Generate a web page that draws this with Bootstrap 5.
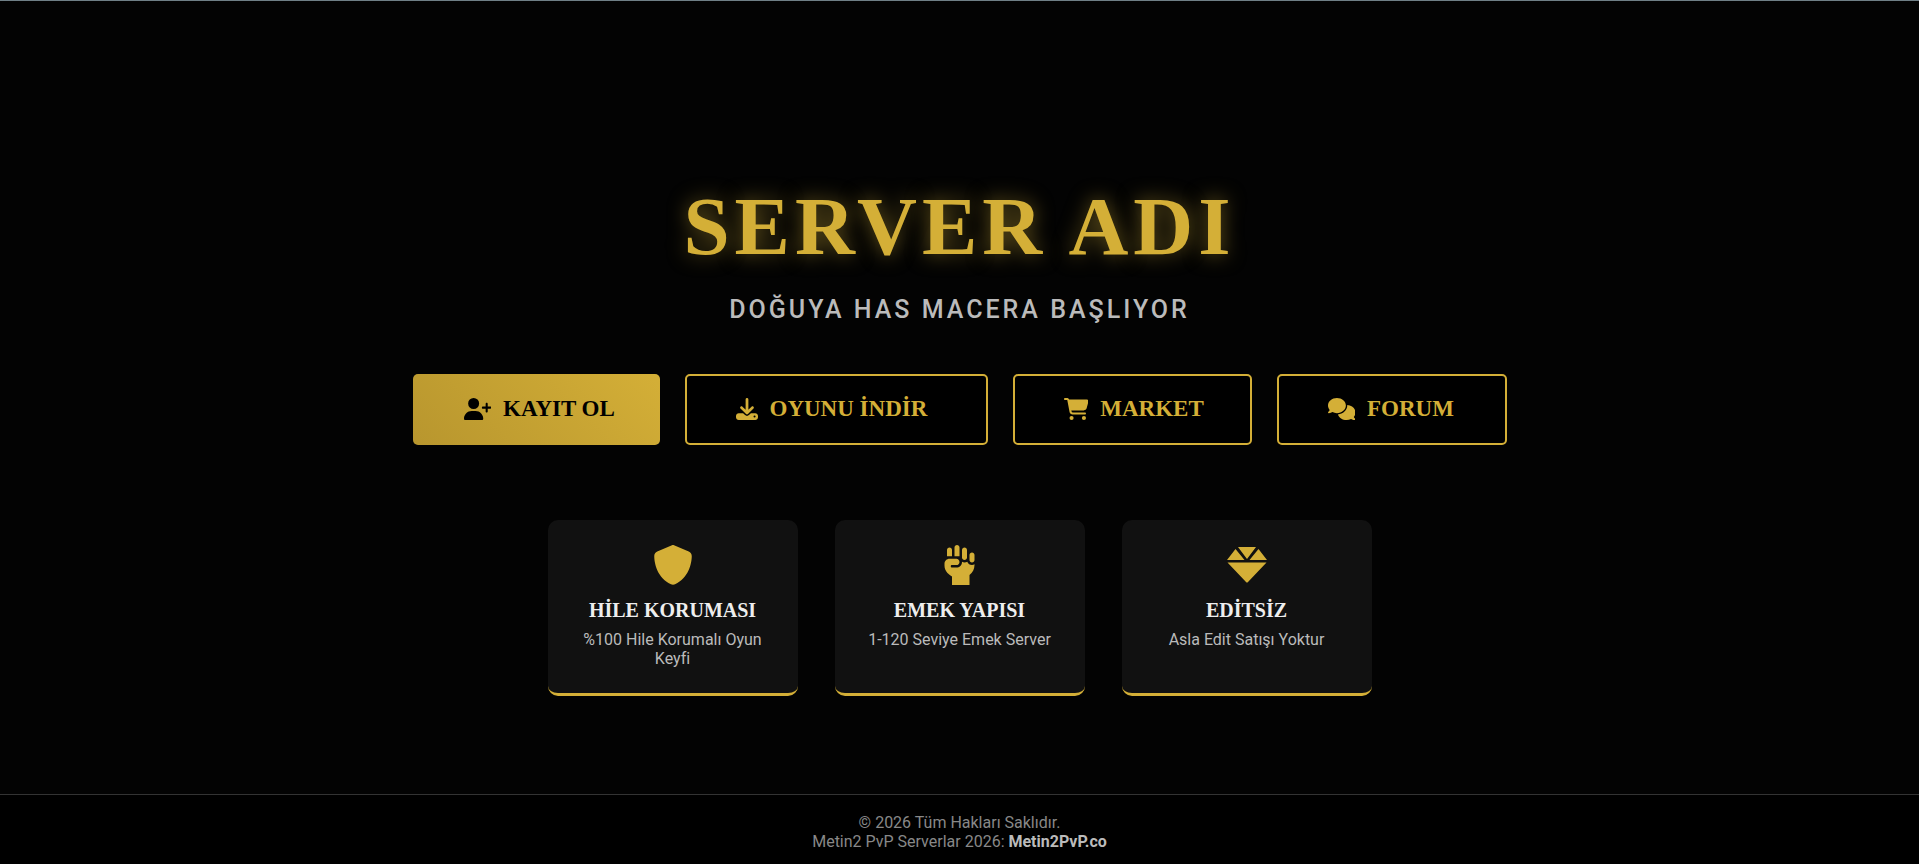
<!DOCTYPE html>
<html lang="tr">
<head>
<meta charset="utf-8">
<meta name="viewport" content="width=device-width, initial-scale=1">
<title>Server Adı</title>
<link href="https://cdn.jsdelivr.net/npm/bootstrap@5.3.0/dist/css/bootstrap.min.css" rel="stylesheet">
<style>
:root { --gold: #d4af37; --gold-dark: #b8962e; }
body { background: #030303; color: #fff; font: 400 16px/19px Roboto, "Liberation Sans", sans-serif; border-top: 1px solid #6f7f86; }
.hero { padding: 72px 16px 0; }
.hero-title { font: 700 83px/108px "Liberation Serif", serif; letter-spacing: 5px; color: var(--gold); text-shadow: 0 0 20px rgba(212, 175, 55, .5); }
.hero-sub { font-size: 25px; font-weight: 500; line-height: 28px; letter-spacing: 3px; color: #bbb; margin: 0 0 50px; }
.actions { gap: 25px; margin-bottom: 75px; }
.btn-game { display: flex; align-items: center; gap: 12px; height: 71px; padding: 0 24px 0 49px; border: 2px solid var(--gold); border-radius: 5px; background: #000; color: var(--gold); font: 700 23px/28px "Liberation Serif", serif; text-align: left; }
.btn-game:hover { background: var(--gold); color: #000; border-color: var(--gold); }
.btn-game svg { height: 22px; width: auto; flex: none; }
.btn-main { background: linear-gradient(45deg, var(--gold-dark), var(--gold)); color: #000; border-color: transparent; background-origin: border-box; }
.w-join { min-width: 247px; }
.w-download { min-width: 303px; }
.w-market { min-width: 239px; }
.w-forum { min-width: 230px; }
.features { gap: 37px; }
.feature { width: 250px; padding: 25px; background: #111; border-bottom: 3px solid var(--gold); border-radius: 10px; }
.feature svg { display: block; height: 40px; margin: 0 auto 11px; color: var(--gold); }
.feature h2 { font: 700 20px/28px "Liberation Serif", serif; color: #eee; margin: 0 0 6px; }
.feature p { color: #bbb; margin: 0; }
.site-footer { background: #000; border-top: 1px solid #333; color: #888; padding: 18px 16px 13px; }
.site-footer a { color: #bbb; font-weight: 700; text-decoration: none; }
</style>
</head>
<body class="d-flex flex-column min-vh-100">
<main class="flex-grow-1 d-flex flex-column justify-content-center hero text-center">
  <h1 class="hero-title mb-3">SERVER ADI</h1>
  <p class="hero-sub">DOĞUYA HAS MACERA BAŞLIYOR</p>
  <nav class="actions d-flex flex-wrap justify-content-center" aria-label="Menü">
    <a href="#" class="btn btn-game btn-main w-join"><svg viewBox="0 0 640 512" fill="currentColor" aria-hidden="true"><path d="M96 128a128 128 0 1 1 256 0A128 128 0 1 1 96 128zM0 482.300C0 383.800 79.800 304 178.300 304h91.400C368.200 304 448 383.800 448 482.300c0 16.400-13.300 29.700-29.700 29.700H29.700C13.300 512 0 498.700 0 482.300zM504 312V248H440c-13.300 0-24-10.700-24-24s10.700-24 24-24h64V136c0-13.300 10.700-24 24-24s24 10.700 24 24v64h64c13.300 0 24 10.700 24 24s-10.700 24-24 24H552v64c0 13.300-10.700 24-24 24s-24-10.700-24-24z"/></svg><span>KAYIT OL</span></a>
    <a href="#" class="btn btn-game w-download"><svg viewBox="0 0 512 512" fill="currentColor" aria-hidden="true"><path d="M288 32c0-17.700-14.300-32-32-32s-32 14.300-32 32V274.700l-73.400-73.400c-12.500-12.500-32.800-12.500-45.300 0s-12.500 32.800 0 45.300l128 128c12.500 12.500 32.800 12.500 45.300 0l128-128c12.500-12.500 12.500-32.800 0-45.300s-32.800-12.500-45.300 0L288 274.700V32zM64 352c-35.300 0-64 28.700-64 64v32c0 35.300 28.700 64 64 64H448c35.300 0 64-28.700 64-64V416c0-35.300-28.700-64-64-64H346.500l-45.300 45.300c-25 25-65.500 25-90.500 0L165.500 352H64zm368 56a24 24 0 1 1 0 48 24 24 0 1 1 0-48z"/></svg><span>OYUNU İNDİR</span></a>
    <a href="#" class="btn btn-game w-market"><svg viewBox="0 0 576 512" fill="currentColor" aria-hidden="true"><path d="M0 24C0 10.700 10.700 0 24 0H69.500c22 0 41.500 12.800 50.600 32h411c26.300 0 45.500 25 38.600 50.400l-41 152.300c-8.500 31.400-37 53.300-69.500 53.300H170.700l5.400 28.500c2.200 11.300 12.100 19.500 23.600 19.500H488c13.300 0 24 10.700 24 24s-10.700 24-24 24H199.700c-34.600 0-64.300-24.600-70.700-58.500L77.400 54.500c-.7-3.800-4-6.500-7.900-6.500H24C10.700 48 0 37.300 0 24zM128 464a48 48 0 1 1 96 0 48 48 0 1 1 -96 0zm336-48a48 48 0 1 1 0 96 48 48 0 1 1 0-96z"/></svg><span>MARKET</span></a>
    <a href="#" class="btn btn-game w-forum"><svg viewBox="0 0 640 512" fill="currentColor" aria-hidden="true"><path d="M208 352c114.900 0 208-78.800 208-176S322.900 0 208 0S0 78.800 0 176c0 38.600 14.700 74.300 39.600 103.400c-3.500 9.400-8.700 17.700-14.200 24.700c-4.800 6.200-9.700 11-13.300 14.300c-1.800 1.600-3.300 2.900-4.300 3.700c-.5 .4-.9 .7-1.100 .8l-.2 .2C1 327.200-1.400 334.400 .8 340.900S9.100 352 16 352c21.800 0 43.800-5.600 62.100-12.500c9.200-3.500 17.800-7.400 25.200-11.400C134.100 343.300 169.800 352 208 352zM448 176c0 112.300-99.100 196.900-216.500 207C255.800 457.400 336.400 512 432 512c38.200 0 73.900-8.700 104.700-23.900c7.500 4 16 7.900 25.200 11.400c18.300 6.900 40.300 12.500 62.100 12.500c6.900 0 13.100-4.500 15.200-11.100c2.100-6.600-.2-13.800-5.800-17.900l-.2-.2c-.2-.2-.6-.4-1.100-.8c-1-.8-2.500-2-4.300-3.700c-3.600-3.300-8.500-8.100-13.300-14.300c-5.500-7-10.700-15.400-14.200-24.700c24.900-29 39.600-64.700 39.600-103.400c0-92.800-84.900-168.900-192.600-175.500c.4 5.100 .6 10.300 .6 15.500z"/></svg><span>FORUM</span></a>
  </nav>
  <section class="features d-flex flex-wrap justify-content-center">
    <article class="feature"><svg viewBox="0 0 512 512" fill="currentColor" aria-hidden="true"><path d="M256 0c4.600 0 9.200 1 13.400 2.900L457.700 82.800c22 9.300 38.400 31 38.300 57.200c-.5 99.200-41.300 280.700-213.600 363.200c-16.700 8-36.100 8-52.800 0C57.300 420.700 16.500 239.200 16 140c-.1-26.200 16.300-47.900 38.300-57.200L242.700 2.900C246.800 1 251.400 0 256 0z"/></svg><h2>HİLE KORUMASI</h2><p>%100 Hile Korumalı Oyun Keyfi</p></article>
    <article class="feature"><svg viewBox="0 0 448 512" fill="currentColor" aria-hidden="true"><path d="M192 0c17.700 0 32 14.300 32 32V144H160V32c0-17.700 14.300-32 32-32zM64 64c0-17.700 14.300-32 32-32s32 14.300 32 32v80H64V64zm192 0c0-17.700 14.300-32 32-32s32 14.300 32 32v96c0 17.700-14.300 32-32 32s-32-14.300-32-32V64zm96 64c0-17.700 14.300-32 32-32s32 14.300 32 32v64c0 17.700-14.300 32-32 32s-32-14.300-32-32V128zm-96 88l0-.6c9.400 5.400 20.300 8.600 32 8.600c13.200 0 25.400-4 35.600-10.800c8.700 24.900 32.500 42.800 60.400 42.800c11.700 0 22.600-3.100 32-8.600V256c0 52.300-25.100 98.800-64 128v128H128V401.600c-17.300-7.900-33.200-18.800-46.900-32.500L69.500 357.500C45.500 333.500 32 300.900 32 267V240c0-35.300 28.700-64 64-64h88c22.100 0 40 17.900 40 40s-17.900 40-40 40H128c-8.800 0-16 7.200-16 16s7.200 16 16 16h56c39.800 0 72-32.200 72-72z"/></svg><h2>EMEK YAPISI</h2><p>1-120 Seviye Emek Server</p></article>
    <article class="feature"><svg viewBox="0 0 40 40" fill="currentColor" aria-hidden="true"><path d="M11 2h18l-9 12zM8.500 4l9 11H0zM31.500 4L40 15H22.500zM.5 17.500h39L21 37q-1 1-2 0z"/></svg><h2>EDİTSİZ</h2><p>Asla Edit Satışı Yoktur</p></article>
  </section>
</main>
<footer class="site-footer text-center">
  <div>© 2026 Tüm Hakları Saklıdır.</div>
  <div>Metin2 PvP Serverlar 2026: <a href="#">Metin2PvP.co</a></div>
</footer>
<script src="https://cdn.jsdelivr.net/npm/bootstrap@5.3.0/dist/js/bootstrap.bundle.min.js"></script>
</body>
</html>
